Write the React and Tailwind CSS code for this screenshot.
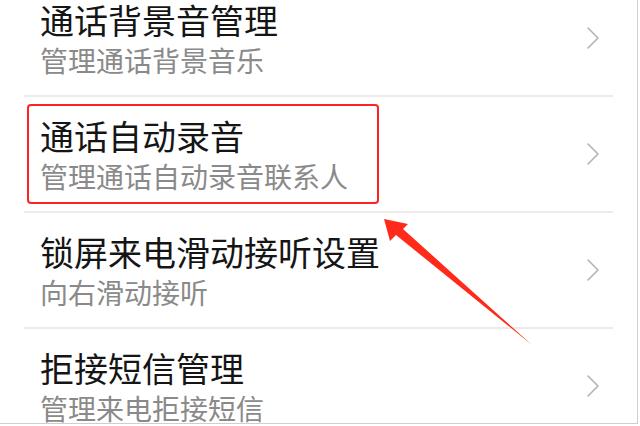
import React from "react";

const rows = [
  { title: "通话背景音管理", sub: "管理通话背景音乐" },
  { title: "通话自动录音", sub: "管理通话自动录音联系人", marked: true },
  { title: "锁屏来电滑动接听设置", sub: "向右滑动接听" },
  { title: "拒接短信管理", sub: "管理来电拒接短信" },
];

const Chevron = () => (
  <svg width="14" height="24" viewBox="0 0 14 24" fill="none" className="shrink-0">
    <path d="M2 2l10 10-10 10" stroke="#b4b4b4" strokeWidth="1.6" strokeLinecap="round" strokeLinejoin="round" />
  </svg>
);

const App = () => {
  return (
    <div className="relative w-[640px] h-[426px] overflow-hidden bg-white font-['Noto_Sans_CJK_SC','Noto_Sans',sans-serif]">
      <div className="w-[638px] h-[424px] overflow-hidden border-r border-b border-[#cfcfcf]">
        <div className="-mt-[19px]">
          {rows.map((row) => (
            <div
              key={row.title}
              className="relative ml-[24px] mr-[24px] h-[116px] border-b-2 border-[#ebebeb] flex items-center justify-between pl-[16px] pr-[13px]"
            >
              <div className="flex flex-col">
                <span className="text-[34px] leading-[40px] text-[#151515] whitespace-nowrap">{row.title}</span>
                <span className="mt-[3px] text-[28px] leading-[34px] text-[#8a8a8a] whitespace-nowrap">{row.sub}</span>
              </div>
              <Chevron />
              {row.marked && (
                <div className="absolute left-[3px] top-[7px] w-[352px] h-[100px] rounded-[4px] border-2 border-[#ff2222]" />
              )}
            </div>
          ))}
        </div>
      </div>

      {/* annotation arrow */}
      <svg className="absolute left-0 top-0 pointer-events-none" width="640" height="426" viewBox="0 0 640 426">
        <polygon points="384,219 408,224 403,229 532,345 396,235 390,241" fill="#ff2a1a" />
      </svg>
    </div>
  );
};

export default App;
